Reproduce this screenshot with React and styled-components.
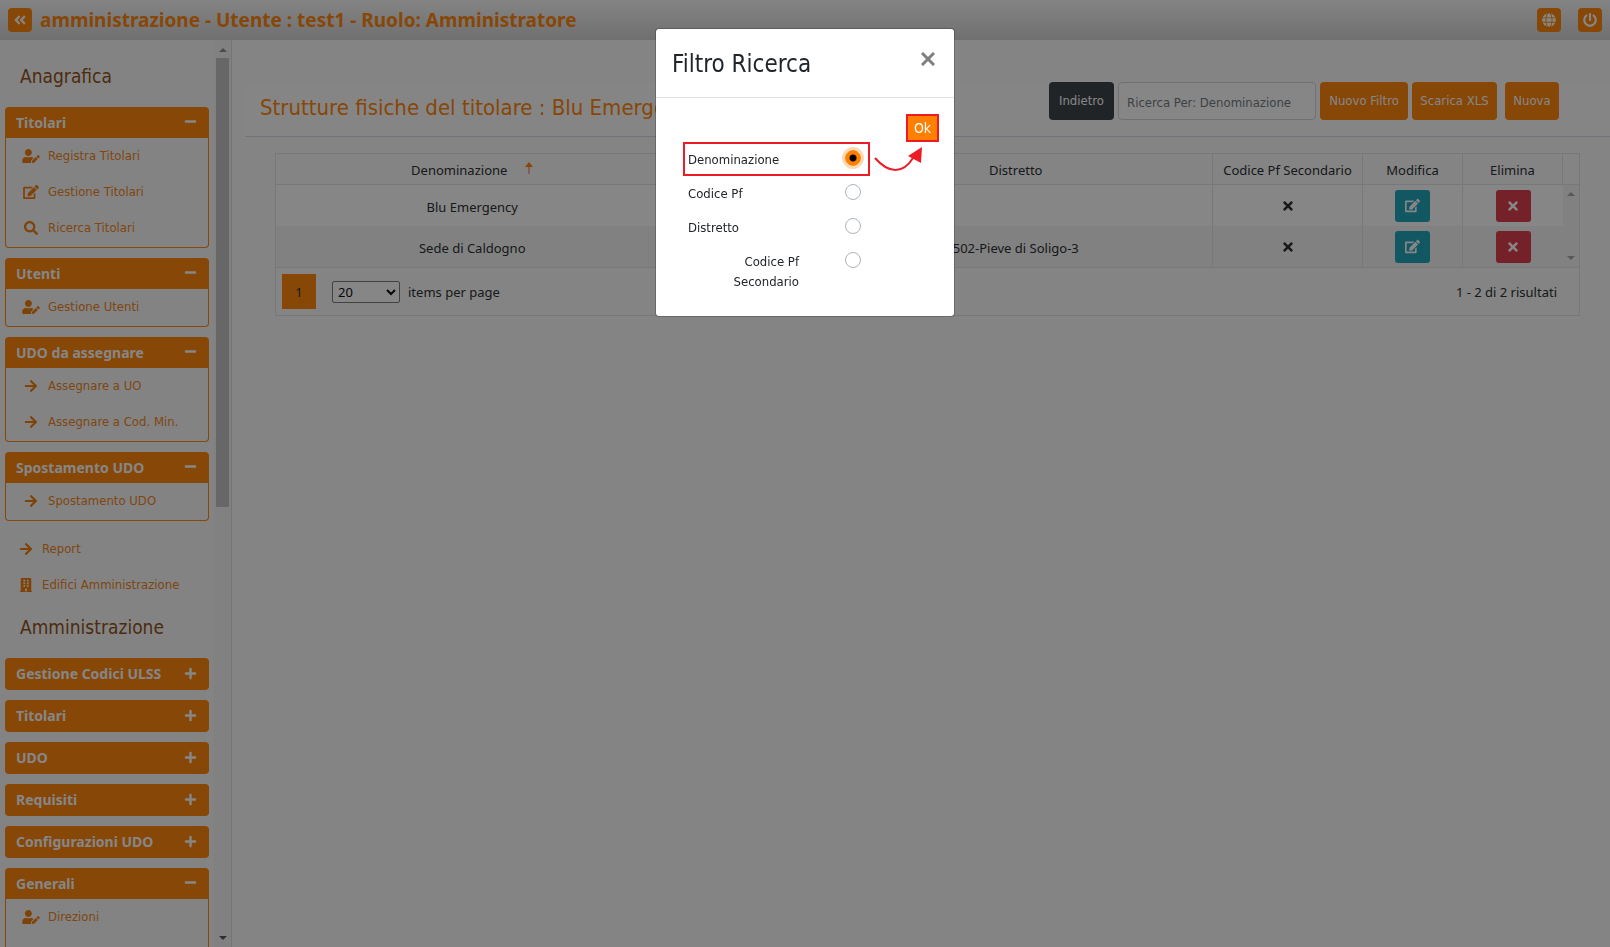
import { useState } from "react";
import styled, { createGlobalStyle, css } from "styled-components";
import {
  FaAngleDoubleLeft,
  FaArrowRight,
  FaBuilding,
  FaEdit,
  FaGlobe,
  FaMinus,
  FaPlus,
  FaPowerOff,
  FaSearch,
  FaTimes,
  FaUserEdit,
} from "react-icons/fa";

const GlobalStyle = createGlobalStyle`
  :root {
    --orange: #ff8000;
    --line: #dee2e6;
    --text: #212529;
    --condensed: "DejaVu Sans Condensed", "DejaVu Sans", sans-serif;
    --regular: "Noto Sans", "Open Sans", sans-serif;
  }

  * {
    box-sizing: border-box;
  }

  body {
    margin: 0;
    background-color: #fafafa;
    color: var(--text);
    font-family: var(--condensed);
    font-size: 13px;
    line-height: 20px;
  }

  button, input, select {
    font: inherit;
  }
`;

const Page = styled.div`
  height: 100vh;
  display: flex;
  flex-direction: column;
  overflow: hidden;
`;

const Header = styled.header`
  flex: none;
  height: 40px;
  padding: 0 8px;
  display: flex;
  align-items: center;
  background: linear-gradient(#fafafa, #d2d2d2);
`;

const HeaderTitle = styled.h1`
  flex: 1;
  margin: 0 0 0 8px;
  font-family: var(--regular);
  font-size: 19px;
  font-weight: 700;
  color: var(--orange);
`;

const HeaderBtn = styled.button`
  width: 24px;
  height: 24px;
  margin-left: ${(p) => (p.$spaced ? "17px" : "0")};
  padding: 0;
  display: flex;
  justify-content: center;
  align-items: center;
  border: 0;
  border-radius: 4px;
  background-color: var(--orange);
  color: #fff;
  font-size: 14px;
`;

const Body = styled.div`
  flex: 1;
  min-height: 0;
  display: flex;
`;

const Sidebar = styled.aside`
  flex: none;
  width: 232px;
  display: flex;
  overflow: hidden;
  background-color: #f8f9fa;
  border-right: 1px solid #ddd;
`;

const Menu = styled.nav`
  flex: 1;
  padding: 0 5px;
  overflow: hidden;
`;

const MenuTitle = styled.h2`
  margin: 0;
  padding: ${(p) => (p.$first ? "24px 15px 19px" : "12px 15px 19px")};
  font-size: 19px;
  font-weight: 400;
  line-height: 24px;
  color: #8b4a0e;
`;

const Group = styled.section`
  margin-bottom: 10px;
`;

const GroupHeader = styled.button`
  width: 100%;
  height: ${(p) => (p.$open ? "31px" : "32px")};
  padding: 0 12px 0 11px;
  display: flex;
  justify-content: space-between;
  align-items: center;
  border: 0;
  border-radius: ${(p) => (p.$open ? "4px 4px 0 0" : "4px")};
  background-color: var(--orange);
  color: #fff;
  font-family: var(--regular);
  font-size: 14px;
  font-weight: 700;

  svg {
    margin-bottom: 2px;
    font-size: 13px;
  }
`;

const GroupList = styled.ul`
  min-height: ${(p) => (p.$tall ? "110px" : "0")};
  margin: 0;
  padding: 0 0 1px;
  list-style: none;
  border: 1px solid var(--orange);
  border-top: 0;
  border-radius: 0 0 4px 4px;
`;

const MenuLink = styled.a`
  height: 36px;
  padding-left: ${(p) => (p.$loose ? "12px" : "16px")};
  display: flex;
  align-items: center;
  color: #f08010;
  text-decoration: none;

  svg {
    flex: none;
    width: 18px;
    height: 14px;
    margin-right: ${(p) => (p.$loose ? "7px" : "8px")};
    color: #f07800;
  }
`;

const ScrollTrack = styled.div`
  flex: none;
  width: 17px;
  padding: 8px 0 7px;
  display: flex;
  flex-direction: column;
  align-items: center;
  background-color: #f4f4f4;
`;

const Thumb = styled.div`
  width: 13px;
  height: 449px;
  margin: 6px 0 auto;
  background-color: #c1c1c1;
`;

const Arrow = styled.span`
  width: 0;
  height: 0;
  border: 4px solid transparent;
  ${(p) =>
    p.$up
      ? css`
          border-top: 0;
          border-bottom-color: ${p.$color};
        `
      : css`
          border-bottom: 0;
          border-top-color: ${p.$color};
        `}
`;

const Main = styled.main`
  flex: 1;
  min-width: 0;
  padding: 42px 0 0 13px;
`;

const TitleBar = styled.div`
  height: 55px;
  padding: 0 51px 0 15px;
  display: flex;
  align-items: flex-start;
  gap: 4px;
  background-color: #fdfdfd;
  border-bottom: 1px solid #d3dae2;
`;

const PageTitle = styled.h2`
  flex: 1;
  margin: 0;
  padding-top: 10px;
  font-size: 22px;
  font-weight: 400;
  line-height: 32px;
  white-space: nowrap;
  color: var(--orange);
`;

const ToolBtn = styled.button`
  height: 38px;
  width: ${(p) => p.$width};
  margin-left: ${(p) => (p.$apart ? "4px" : "0")};
  padding: 0;
  border: 0;
  border-radius: 4px;
  background-color: ${(p) => (p.$dark ? "#343a40" : "var(--orange)")};
  color: #fff;
  white-space: nowrap;
`;

const SearchInput = styled.input`
  width: 198px;
  height: 38px;
  padding: 3px 8px 1px;
  border: 1px solid #ced4da;
  border-radius: 4px;
  background-color: #fff;

  &::placeholder {
    color: #6c757d;
    opacity: 1;
  }
`;

const Grid = styled.div`
  margin: 16px 30px 0;
  border: 1px solid var(--line);
  background-color: #fafafa;
  font-family: var(--regular);
`;

const Table = styled.table`
  width: 100%;
  table-layout: fixed;
  border-collapse: separate;
  border-spacing: 0;
`;

const Col = styled.col`
  width: ${(p) => p.$width || "auto"};
`;

const Th = styled.th`
  height: 31px;
  padding: 2px 0 0;
  font-weight: 400;
  text-align: center;
  border-bottom: 1px solid var(--line);
  border-right: ${(p) => (p.$last ? "0" : "1px solid var(--line)")};
`;

const SortArrow = styled.svg`
  width: 8px;
  height: 12px;
  margin-left: 18px;
  vertical-align: 1px;
`;

const Row = styled.tr`
  background-color: ${(p) => (p.$alt ? "#f4f4f4" : "#fff")};
`;

const Td = styled.td`
  height: 41px;
  padding: ${(p) => (p.$text ? "2px 0 0" : "0")};
  text-align: center;
  vertical-align: middle;
  border-right: ${(p) => (p.$plain ? "0" : "1px solid var(--line)")};

  > svg {
    display: block;
    margin: 0 auto;
    font-size: 14px;
  }
`;

const ScrollCell = styled.td`
  padding: 7px 0;
  background-color: #f4f4f4;
`;

const ScrollArrows = styled.div`
  height: 68px;
  display: flex;
  flex-direction: column;
  justify-content: space-between;
  align-items: center;
`;

const ActionBtn = styled.button`
  width: 35px;
  height: 32px;
  margin: 0 auto;
  padding: 0;
  display: flex;
  justify-content: center;
  align-items: center;
  border: 0;
  border-radius: 3px;
  background-color: ${(p) => (p.$danger ? "#dc3545" : "#17a2b8")};
  color: #fff;
  font-size: ${(p) => (p.$danger ? "14px" : "15px")};
`;

const Pager = styled.div`
  height: 48px;
  padding: 0 22px 0 6px;
  display: flex;
  align-items: center;
  border-top: 1px solid var(--line);
`;

const PageNumber = styled.button`
  width: 34px;
  height: 35px;
  margin-right: 16px;
  padding: 0;
  border: 0;
  background-color: var(--orange);
  color: var(--text);
`;

const PageSize = styled.select`
  width: 68px;
  height: 22px;
  margin-right: 8px;
  padding: 0 1px;
  border: 1px solid #767676;
  border-radius: 2px;
  background-color: #fff;
  color: #000;
`;

const Total = styled.span`
  margin-left: auto;
`;

const Backdrop = styled.div`
  position: fixed;
  inset: 0;
  display: flex;
  justify-content: center;
  align-items: flex-start;
  padding-top: 28px;
  background-color: rgba(14, 14, 14, 0.5);
`;

const Modal = styled.div`
  width: 300px;
  background-color: #fff;
  border: 1px solid rgba(0, 0, 0, 0.2);
  border-radius: 4px;
  background-clip: padding-box;
`;

const ModalHeader = styled.div`
  height: 69px;
  padding: 16px;
  display: flex;
  justify-content: space-between;
  align-items: flex-start;
  border-bottom: 1px solid var(--line);
`;

const ModalTitle = styled.h4`
  margin: 0;
  font-size: 24px;
  font-weight: 400;
  line-height: 38px;
`;

const CloseBtn = styled.button`
  width: 20px;
  height: 28px;
  padding: 0;
  display: flex;
  justify-content: center;
  align-items: center;
  border: 0;
  background: none;
  color: #7f7f7f;
`;

const ModalBody = styled.div`
  position: relative;
  padding: 16px 15px 22px 27px;
`;

const OkBtn = styled.button`
  width: 33px;
  height: 28px;
  margin-left: auto;
  padding: 0;
  display: block;
  border: 2px solid #ed1c24;
  background-color: var(--orange);
  color: #fff;
  font-size: 14px;
`;

const Option = styled.label`
  width: 187px;
  min-height: 34px;
  padding: 6px 7px 0 3px;
  display: flex;
  justify-content: space-between;
  align-items: flex-start;
  border: 2px solid ${(p) => (p.$marked ? "#ed1c24" : "transparent")};
`;

const OptionText = styled.span`
  width: 111px;
  text-align: ${(p) => (p.$right ? "right" : "left")};
`;

const Radio = styled.input`
  appearance: none;
  width: 16px;
  height: 16px;
  margin: 0;
  border: 1px solid #adb5bd;
  border-radius: 50%;
  background-color: #fff;

  &:checked {
    border-color: var(--orange);
    background: radial-gradient(circle, #000 3px, var(--orange) 4px);
    box-shadow: 0 0 0 3px #ffd9b3;
  }
`;

const Pointer = styled.svg`
  position: absolute;
  left: 217px;
  top: 48px;
  width: 50px;
  height: 28px;
`;

const groups = [
  {
    title: "Titolari",
    items: [
      [FaUserEdit, "Registra Titolari"],
      [FaEdit, "Gestione Titolari"],
      [FaSearch, "Ricerca Titolari"],
    ],
  },
  { title: "Utenti", items: [[FaUserEdit, "Gestione Utenti"]] },
  {
    title: "UDO da assegnare",
    items: [
      [FaArrowRight, "Assegnare a UO"],
      [FaArrowRight, "Assegnare a Cod. Min."],
    ],
  },
  { title: "Spostamento UDO", items: [[FaArrowRight, "Spostamento UDO"]] },
];

const adminGroups = [
  { title: "Gestione Codici ULSS" },
  { title: "Titolari" },
  { title: "UDO" },
  { title: "Requisiti" },
  { title: "Configurazioni UDO" },
  { title: "Generali", tall: true, items: [[FaUserEdit, "Direzioni"]] },
];

const rows = [
  { name: "Blu Emergency", district: "" },
  { name: "Sede di Caldogno", district: "502-Pieve di Soligo-3" },
];

const filters = ["Denominazione", "Codice Pf", "Distretto", "Codice Pf Secondario"];

const MenuGroup = ({ group }) => (
  <Group>
    <GroupHeader $open={!!group.items}>
      {group.title}
      {group.items ? <FaMinus /> : <FaPlus />}
    </GroupHeader>
    {group.items && (
      <GroupList $tall={group.tall}>
        {group.items.map(([Icon, text]) => (
          <li key={text}>
            <MenuLink href="#">
              <Icon />
              {text}
            </MenuLink>
          </li>
        ))}
      </GroupList>
    )}
  </Group>
);

const FilterModal = () => {
  const [filter, setFilter] = useState(filters[0]);

  return (
    <Backdrop>
      <Modal role="dialog" aria-labelledby="filter-title">
        <ModalHeader>
          <ModalTitle id="filter-title">Filtro Ricerca</ModalTitle>
          <CloseBtn aria-label="Chiudi">
            <svg width="14" height="14" viewBox="0 0 14 14">
              <path d="M1 1L13 13M13 1L1 13" stroke="currentColor" strokeWidth="3" />
            </svg>
          </CloseBtn>
        </ModalHeader>
        <ModalBody>
          <OkBtn>Ok</OkBtn>
          {filters.map((f, i) => (
            <Option key={f} $marked={i === 0}>
              <OptionText $right={i === 3}>{f}</OptionText>
              <Radio
                type="radio"
                name="filter"
                checked={filter === f}
                onChange={() => setFilter(f)}
              />
            </Option>
          ))}
          <Pointer viewBox="0 0 50 28">
            <path d="M2 12C16 28 30 28 40 12" fill="none" stroke="#ed1c24" strokeWidth="2" />
            <path d="M49 1L35 10L48 17Z" fill="#ed1c24" />
          </Pointer>
        </ModalBody>
      </Modal>
    </Backdrop>
  );
};

const App = () => (
  <>
    <GlobalStyle />
    <Page>
      <Header>
        <HeaderBtn aria-label="Menu">
          <FaAngleDoubleLeft />
        </HeaderBtn>
        <HeaderTitle>amministrazione - Utente : test1 - Ruolo: Amministratore</HeaderTitle>
        <HeaderBtn aria-label="Lingua">
          <FaGlobe />
        </HeaderBtn>
        <HeaderBtn $spaced aria-label="Esci">
          <FaPowerOff />
        </HeaderBtn>
      </Header>
      <Body>
        <Sidebar>
          <Menu>
            <MenuTitle $first>Anagrafica</MenuTitle>
            {groups.map((g) => (
              <MenuGroup key={g.title} group={g} />
            ))}
            <MenuLink $loose href="#">
              <FaArrowRight />
              Report
            </MenuLink>
            <MenuLink $loose href="#">
              <FaBuilding />
              Edifici Amministrazione
            </MenuLink>
            <MenuTitle>Amministrazione</MenuTitle>
            {adminGroups.map((g) => (
              <MenuGroup key={g.title} group={g} />
            ))}
          </Menu>
          <ScrollTrack>
            <Arrow $up $color="#8a8a8a" />
            <Thumb />
            <Arrow $color="#505050" />
          </ScrollTrack>
        </Sidebar>
        <Main>
          <TitleBar>
            <PageTitle>Strutture fisiche del titolare : Blu Emergency</PageTitle>
            <ToolBtn $dark $width="65px">Indietro</ToolBtn>
            <SearchInput placeholder="Ricerca Per: Denominazione" aria-label="Ricerca" />
            <ToolBtn $width="88px">Nuovo Filtro</ToolBtn>
            <ToolBtn $width="85px">Scarica XLS</ToolBtn>
            <ToolBtn $width="54px" $apart>Nuova</ToolBtn>
          </TitleBar>
          <Grid>
            <Table>
              <colgroup>
                <Col />
                <Col $width="150px" />
                <Col />
                <Col $width="150px" />
                <Col $width="100px" />
                <Col $width="100px" />
                <Col $width="16px" />
              </colgroup>
              <thead>
                <tr>
                  <Th>
                    Denominazione
                    <SortArrow viewBox="0 0 8 12">
                      <path d="M4 0L8 5H0Z" fill="#ff8000" />
                      <path d="M4 4V12" stroke="#ff6040" />
                    </SortArrow>
                  </Th>
                  <Th>Codice Pf</Th>
                  <Th>Distretto</Th>
                  <Th>Codice Pf Secondario</Th>
                  <Th>Modifica</Th>
                  <Th>Elimina</Th>
                  <Th $last />
                </tr>
              </thead>
              <tbody>
                {rows.map((r, i) => (
                  <Row key={r.name} $alt={i % 2 === 1}>
                    <Td $text>{r.name}</Td>
                    <Td $text />
                    <Td $text>{r.district}</Td>
                    <Td>
                      <FaTimes />
                    </Td>
                    <Td>
                      <ActionBtn aria-label="Modifica">
                        <FaEdit />
                      </ActionBtn>
                    </Td>
                    <Td $plain>
                      <ActionBtn $danger aria-label="Elimina">
                        <FaTimes />
                      </ActionBtn>
                    </Td>
                    {i === 0 && (
                      <ScrollCell rowSpan={rows.length}>
                        <ScrollArrows>
                          <Arrow $up $color="#a0a0a0" />
                          <Arrow $color="#a0a0a0" />
                        </ScrollArrows>
                      </ScrollCell>
                    )}
                  </Row>
                ))}
              </tbody>
            </Table>
            <Pager>
              <PageNumber>1</PageNumber>
              <PageSize id="page-size" defaultValue="20">
                <option>10</option>
                <option>20</option>
                <option>50</option>
              </PageSize>
              <label htmlFor="page-size">items per page</label>
              <Total>1 - 2 di 2 risultati</Total>
            </Pager>
          </Grid>
        </Main>
      </Body>
    </Page>
    <FilterModal />
  </>
);

export default App;
